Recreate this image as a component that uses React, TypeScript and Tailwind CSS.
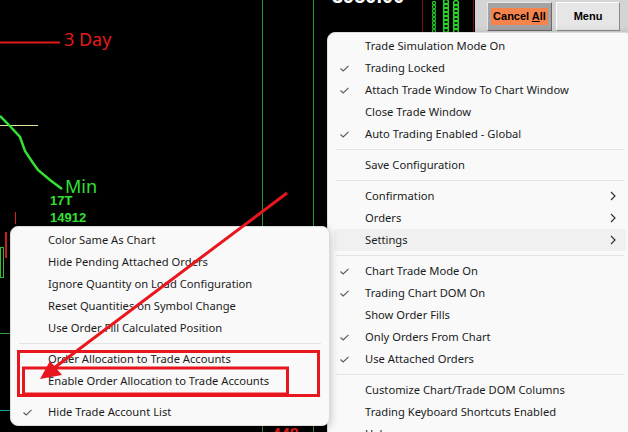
import React from "react";

type Item =
  | { kind: "sep" }
  | { kind: "item"; label: string; checked?: boolean; sub?: boolean; active?: boolean };

const mainMenu: Item[] = [
  { kind: "item", label: "Trade Simulation Mode On" },
  { kind: "item", label: "Trading Locked", checked: true },
  { kind: "item", label: "Attach Trade Window To Chart Window", checked: true },
  { kind: "item", label: "Close Trade Window" },
  { kind: "item", label: "Auto Trading Enabled - Global", checked: true },
  { kind: "sep" },
  { kind: "item", label: "Save Configuration" },
  { kind: "sep" },
  { kind: "item", label: "Confirmation", sub: true },
  { kind: "item", label: "Orders", sub: true },
  { kind: "item", label: "Settings", sub: true, active: true },
  { kind: "sep" },
  { kind: "item", label: "Chart Trade Mode On", checked: true },
  { kind: "item", label: "Trading Chart DOM On", checked: true },
  { kind: "item", label: "Show Order Fills" },
  { kind: "item", label: "Only Orders From Chart", checked: true },
  { kind: "item", label: "Use Attached Orders", checked: true },
  { kind: "sep" },
  { kind: "item", label: "Customize Chart/Trade DOM Columns" },
  { kind: "item", label: "Trading Keyboard Shortcuts Enabled" },
  { kind: "item", label: "Help" },
];

const settingsMenu: Item[] = [
  { kind: "item", label: "Color Same As Chart" },
  { kind: "item", label: "Hide Pending Attached Orders" },
  { kind: "item", label: "Ignore Quantity on Load Configuration" },
  { kind: "item", label: "Reset Quantities on Symbol Change" },
  { kind: "item", label: "Use Order Fill Calculated Position" },
  { kind: "sep" },
  { kind: "item", label: "Order Allocation to Trade Accounts" },
  { kind: "item", label: "Enable Order Allocation to Trade Accounts" },
  { kind: "sep" },
  { kind: "item", label: "Hide Trade Account List", checked: true },
];

function Check() {
  return (
    <svg width="9" height="7" viewBox="0 0 9 7" fill="none">
      <path d="M0.5 3.5 L3.2 6 L8.5 0.8" stroke="#5a5a5a" strokeWidth="1.1" />
    </svg>
  );
}

function Chevron() {
  return (
    <svg width="6" height="10" viewBox="0 0 6 10" fill="none">
      <path d="M1 1 L5 5 L1 9" stroke="#333" strokeWidth="1.2" />
    </svg>
  );
}

function MenuList({ items }: { items: Item[] }) {
  return (
    <div className="flex flex-col">
      {items.map((it, i) =>
        it.kind === "sep" ? (
          <div key={i} className="mx-[8px] py-[4px]">
            <div className="h-px bg-[#e3e3e3]" />
          </div>
        ) : (
          <div
            key={i}
            className={`mx-[6px] flex h-[22px] items-center rounded-[4px] ${it.active ? "bg-[#f0f0f0]" : ""}`}
          >
            <div className="flex w-[31px] shrink-0 items-center pl-[6px]">{it.checked && <Check />}</div>
            <span className="whitespace-nowrap text-[#1b1b1b]">{it.label}</span>
            {it.sub && (
              <div className="ml-auto mr-[10px] flex items-center">
                <Chevron />
              </div>
            )}
          </div>
        )
      )}
    </div>
  );
}

function ChartBackground() {
  return (
    <svg className="absolute inset-0" width="628" height="432" viewBox="0 0 628 432">
      {/* grid verticals */}
      <line x1="262.5" y1="0" x2="262.5" y2="432" stroke="#2a9a2a" strokeWidth="1" />
      <line x1="313.5" y1="0" x2="313.5" y2="432" stroke="#2a9a2a" strokeWidth="1" />
      <line x1="422.5" y1="0" x2="422.5" y2="40" stroke="#7a1010" strokeWidth="1" />
      <line x1="473.5" y1="0" x2="473.5" y2="40" stroke="#7a1010" strokeWidth="1" />
      {/* 3 day line */}
      <line x1="0" y1="42.5" x2="60" y2="42.5" stroke="#e31b1b" strokeWidth="2" />
      {/* yellow level */}
      <line x1="0" y1="125.5" x2="38" y2="125.5" stroke="#e6e6a0" strokeWidth="1" />
      {/* green trend */}
      <polyline
        points="0,116 8,124 20,137 25,151 33,163 38,170 50,180 62,189"
        fill="none"
        stroke="#33e033"
        strokeWidth="2.5"
      />
      {/* left edge candles */}
      <line x1="15.5" y1="212" x2="15.5" y2="224" stroke="#d02020" strokeWidth="1" />
      <line x1="6" y1="232" x2="6" y2="258" stroke="#d02020" strokeWidth="2" />
      <rect x="0.5" y="247.5" width="3" height="30" fill="none" stroke="#2fbf2f" strokeWidth="1" />
      <line x1="0" y1="333.5" x2="10" y2="333.5" stroke="#2fa82f" strokeWidth="1" />
      <line x1="0" y1="410.5" x2="10" y2="410.5" stroke="#1fa3a3" strokeWidth="1" />
      {/* green tape */}
      {[0, 1, 2, 3, 4, 5, 6, 7].map((k) => (
        <g key={k}>
          <circle cx="434" cy={3 + k * 4} r="1.6" fill="none" stroke="#25c825" strokeWidth="1.2" />
          <circle cx="446" cy={2 + k * 4} r="2.4" fill="none" stroke="#2bd82b" strokeWidth="1.5" />
          <circle cx="456" cy={3 + k * 4} r="2.4" fill="none" stroke="#2bd82b" strokeWidth="1.5" />
        </g>
      ))}
    </svg>
  );
}

export default function App() {
  return (
    <div className="relative h-[432px] w-[628px] overflow-hidden bg-black font-['Noto_Sans',sans-serif] text-[11.2px]">
      <ChartBackground />

      {/* chart labels */}
      <div className="absolute left-[332px] top-[-19px] font-['Liberation_Sans',sans-serif] text-[20px] font-bold text-white">
        3950.00
      </div>
      <div className="absolute left-[64px] top-[27px] text-[18px] leading-[24px] text-[#e31b1b]">3 Day</div>
      <div className="absolute left-[65px] top-[178px] text-[18px] leading-[16px] text-[#33e033]">Min</div>
      <div className="absolute left-[50px] top-[194px] flex flex-col gap-[4px] font-['Liberation_Sans',sans-serif] text-[13px] font-bold leading-[13px] text-[#33e033]">
        <span>17T</span>
        <span>14912</span>
      </div>
      <div className="absolute left-[272px] top-[423px] font-['Liberation_Sans',sans-serif] text-[16px] font-bold text-[#e31b1b]">
        448
      </div>

      {/* trade window buttons */}
      <div className="absolute left-[475px] top-0 flex h-[34px] w-[153px] items-start gap-[4px] bg-[#d4d4d4] pl-[12px] pt-[2px] font-['Liberation_Sans',sans-serif] text-[11px] font-bold">
        <div className="flex h-[29px] w-[65px] items-center justify-center border border-t-[#e8e8e8] border-l-[#e8e8e8] border-b-[#6a6a6a] border-r-[#6a6a6a] bg-[#a3a3a3]">
          <span className="bg-[#f4834c] px-[2px] leading-[17px] text-black">
            Cancel <span className="underline">A</span>ll
          </span>
        </div>
        <div className="flex h-[29px] w-[64px] items-center justify-center border border-t-white border-l-white border-b-[#8a8a8a] border-r-[#8a8a8a] bg-[#e6e6e6] text-black">
          Menu
        </div>
      </div>

      {/* main menu */}
      <div className="absolute left-[327px] top-[32px] w-[306px] rounded-[8px] border border-[#dcdcdc] bg-[#f9f9f9] pt-[2px] shadow-[0_2px_8px_rgba(0,0,0,0.25)]">
        <MenuList items={mainMenu} />
      </div>

      {/* settings submenu */}
      <div className="absolute left-[10px] top-[226px] w-[320px] rounded-[8px] border border-[#dcdcdc] bg-[#f9f9f9] py-[2px] shadow-[0_2px_8px_rgba(0,0,0,0.25)]">
        <MenuList items={settingsMenu} />
      </div>

      {/* annotations */}
      <svg className="pointer-events-none absolute inset-0" width="628" height="432" viewBox="0 0 628 432">
        <rect x="18.5" y="351.5" width="300" height="44" fill="none" stroke="#e8161e" strokeWidth="3" />
        <rect x="23.5" y="368" width="264" height="26" fill="none" stroke="#e8161e" strokeWidth="3" />
        <line x1="287" y1="193" x2="54" y2="368" stroke="#e8161e" strokeWidth="3" />
        <polygon points="40,379 62,375 50,361" fill="#e8161e" />
      </svg>
    </div>
  );
}
